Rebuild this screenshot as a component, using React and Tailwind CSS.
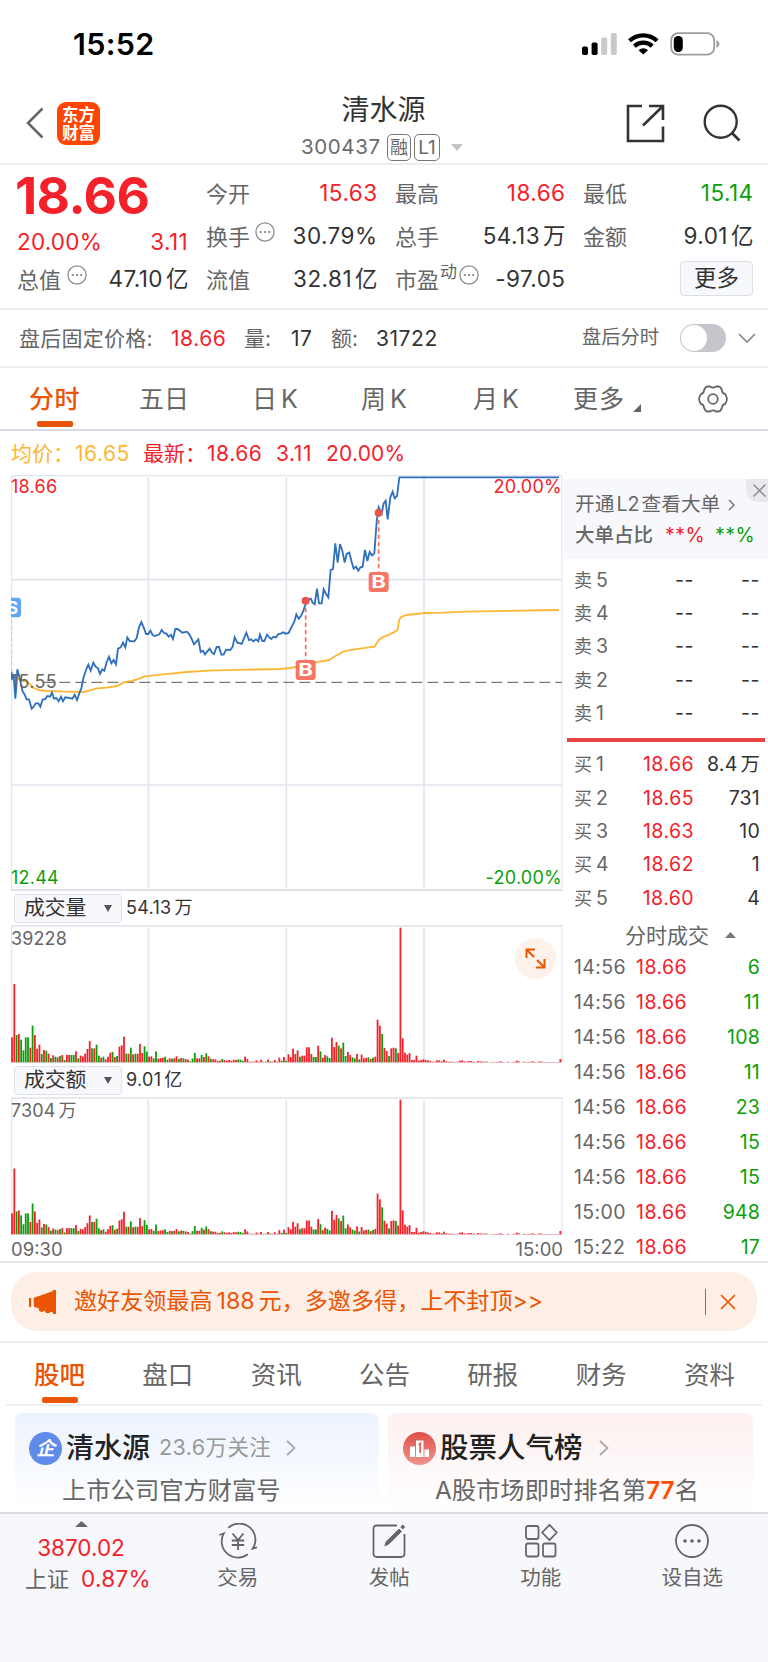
import React from "react";

const RED = "#f4212a";
const GREEN = "#0a9f0a";

const PRICE =
  "36,655 39,645 42,660 46,716 49,680 52,628 58,650 63,672 68,695 73,702 80,718 87,718 95,746 101,740 107,730 115,730 121,740 128,718 135,718 142,708 150,710 156,698 162,716 169,714 176,724 183,710 189,724 196,712 203,713 217,716 224,704 231,720 238,700 244,685 250,655 258,630 265,614 272,632 280,608 287,620 294,625 300,642 307,628 313,632 320,606 327,590 334,610 341,600 348,613 354,566 362,562 369,548 376,562 382,532 389,543 403,544 410,534 417,502 424,486 431,502 438,522 445,522 451,512 458,525 465,528 478,523 485,510 492,519 499,521 506,530 513,524 519,537 526,507 533,507 547,518 561,515 568,523 575,537 582,553 595,538 602,576 609,572 615,583 629,566 636,578 642,582 650,561 657,561 664,584 671,584 678,569 691,570 698,560 704,532 712,548 725,552 733,532 739,518 747,540 753,538 760,544 768,538 775,544 780,524 787,543 793,543 801,524 808,532 814,537 820,530 828,532 835,522 842,521 850,517 857,521 866,519 875,500 883,485 889,463 896,476 903,468 909,455 916,435 922,422 932,416 938,428 944,433 951,386 957,430 965,430 971,388 978,402 985,412 992,330 999,327 1006,250 1013,308 1020,252 1027,272 1034,308 1040,282 1048,278 1055,306 1061,326 1068,320 1075,332 1081,322 1088,320 1095,270 1102,303 1109,276 1116,286 1123,280 1130,185 1136,142 1145,160 1151,130 1157,122 1163,178 1171,112 1178,95 1184,115 1191,108 1198,52 1677,52";

const AVERAGE =
  "36,650 52,655 65,663 78,663 90,672 98,682 115,690 140,693 200,695 252,696 270,691 290,685 320,683 352,678 370,668 410,659 435,649 490,643 560,636 625,632 740,629 840,627 870,624 925,615 945,607 987,600 1010,586 1030,575 1045,571 1080,566 1123,560 1137,540 1146,532 1168,524 1192,511 1198,478 1205,470 1220,465 1275,459 1330,458 1400,455 1677,450";

// One entry per minute; negative values are falling minutes.
const MINUTES = [
  75, 235, -82, 85, -68, -36, -75, -75, 44, -110, 82, 41, 53, -25, 37, -35, 26, -13, 21, -17, 15, -19, 22, -7, 22, 22, -22,
  -22, 33, -12, 20, 18, 26, 40, 64, -42, 42, -53, -20, 14, -17, 9, 17, 29, -31, 16, -19, 47, 51, 77, -26, 26, -44, 24, -26,
  26, 55, 28, -48, -32, 17, 18, -12, -33, 11, 13, 14, -17, -8, 12, -11, 12, 18, -10, 13, -12, 10, 8, -3, -11, -28, 12, 12,
  -22, 16, -27, 18, -11, 9, 9, 5, 5, -10, 7, 5, 7, 5, 8, 7, -9, -8, -5, 17, 10, 2, 2, 2, 6, 2, 8, -2, 2, 8, -3, 2, 7, 2, 14,
  -5, 16, -5, 24, 16, 41, 25, 36, -17, 20, 20, 45, 45, 25, -16, -16, 50, -33, 14, 22, -18, -13, 74, 46, 61, -50, 42, -59,
  -19, 31, 22, -15, -12, 25, -9, 23, 12, 14, -15, 10, -14, 17, 128, 110, -85, 43, 34, -19, 42, 44, -42, 28, 404, 72, 29, 23,
  28, 7, 7, 20, 5, 7, 9, 8, 6, 4, 2, 2, 6, 6, 3, 8, 3, 2, 2, 2, 1, 2, 5, 6, 3, 2, 4, 4, 2, 1, 4, 3, 2, 2, 2, 0, 1, 1, 1, 2, 3,
  1, 0, 2, 0, 1, 2, 5, 3, 0, 2, 1, 1, 2, 3, 1, 1, 3, 2, 1,
];
const VOLUME = [...MINUTES, ...Array(Math.max(0, 240 - MINUTES.length)).fill(1), 10];

// Turnover is volume weighted with the share price of that minute.
const TURNOVER = VOLUME.map((v, i) => v * (i < 34 ? 0.84 : i < 122 ? 0.885 : i < 140 ? 0.92 : i < 170 ? 0.955 : 1));

const SELLS = ["卖5", "卖4", "卖3", "卖2", "卖1"];
const BUYS = [
  ["买", "1", "18.66", "8.4万"],
  ["买", "2", "18.65", "731"],
  ["买", "3", "18.63", "10"],
  ["买", "4", "18.62", "1"],
  ["买", "5", "18.60", "4"],
];
const TICKS = [
  ["14:56", "6"],
  ["14:56", "11"],
  ["14:56", "108"],
  ["14:56", "11"],
  ["14:56", "23"],
  ["14:56", "15"],
  ["14:56", "15"],
  ["15:00", "948"],
  ["15:22", "17"],
];

// A figure, with a small gap before a 万 or 亿 unit.
function Num({ children, className = "" }) {
  const unit = /[万亿]$/.test(children) ? children.slice(-1) : "";
  return (
    <span className={className}>
      {unit ? children.slice(0, -1) : children}
      {unit && <span className="ml-[3px] tracking-normal">{unit}</span>}
    </span>
  );
}

function Info({ className = "" }) {
  return (
    <svg viewBox="0 0 20 20" className={"size-5 shrink-0 " + className}>
      <circle cx="10" cy="10" r="9.1" fill="none" stroke="#8e8e8e" strokeWidth="1.3" />
      <circle cx="5.8" cy="10" r="1.1" fill="#777" />
      <circle cx="10" cy="10" r="1.1" fill="#777" />
      <circle cx="14.2" cy="10" r="1.1" fill="#777" />
    </svg>
  );
}

function StatusBar() {
  return (
    <div className="flex h-[88px] shrink-0 items-center pl-[73px] pr-[48px]">
      <div className="text-[30.500px] font-semibold leading-none tracking-[0.300px] text-black">15:52</div>
      <svg viewBox="0 0 138 24" className="ml-auto h-6 w-[138px]">
        <g transform="translate(0 .5)">
          <rect x="0" y="14" width="6" height="8.5" rx="1.8" fill="#000" />
          <rect x="9.6" y="10" width="6" height="12.5" rx="1.8" fill="#000" />
          <rect x="19.2" y="5" width="6" height="17.5" rx="1.8" fill="#c9c9c9" />
          <rect x="28.8" y="0.5" width="6" height="22" rx="1.8" fill="#c9c9c9" />
        </g>
        <g fill="none" stroke="#000" strokeWidth="4.3">
          <path d="M47.5 8.8 a20 20 0 0 1 27.6 0" />
          <path d="M52.4 14.2 a12.8 12.8 0 0 1 17.8 0" />
        </g>
        <path d="M61.3 22.6 L56.6 18.2 a6.9 6.9 0 0 1 9.4 0 Z" fill="#000" />
        <rect x="89.2" y="1.2" width="43" height="21.4" rx="7" fill="none" stroke="#9d9d9d" strokeWidth="1.8" />
        <rect x="91.8" y="4" width="9" height="16" rx="4.2" fill="#000" />
        <path d="M134.5 8 q3 1.4 3 4 t-3 4z" fill="#9d9d9d" />
      </svg>
    </div>
  );
}

function NavBar() {
  return (
    <div className="flex h-[77px] shrink-0 justify-between border-b-2 border-[#ececee] pl-[26px] pr-[27px]">
      <div className="flex w-[250px] items-start pt-[14px]">
        <svg viewBox="0 0 18 32" className="mt-[5px] h-8 w-[18px]">
          <path d="M16.5 1.5 L2 16 L16.5 30.5" fill="none" stroke="#666" strokeWidth="2.6" />
        </svg>
        <div className="ml-[13px] flex h-[43px] w-[43px] flex-col items-center justify-center rounded-[9px] bg-[#ff4400] text-[16.500px] font-bold leading-[18px] text-white">
          <span>东方</span>
          <span>财富</span>
        </div>
      </div>
      <div className="flex flex-col items-center pt-[7px]">
        <div className="text-[28px] leading-[30px] text-[#333]">清水源</div>
        <div className="ml-[-3px] mt-[9px] flex h-[27px] items-center text-[20.5px] leading-none text-[#6b6b6b]">
          <span className="w-[86px] tracking-[0.600px]">300437</span>
          <span className="flex h-[27px] w-[24px] items-center justify-center rounded-[5px] border border-[#777] text-[18px]">融</span>
          <span className="ml-[3px] flex h-[27px] w-[26px] items-center justify-center rounded-[5px] border border-[#777] text-[19px]">L1</span>
          <svg viewBox="0 0 12 7" className="ml-[11px] h-[7px] w-3">
            <path d="M0 0H12L6 7Z" fill="#c4c4c4" />
          </svg>
        </div>
      </div>
      <div className="flex w-[250px] items-start justify-end gap-[38px] pt-[16px]">
        <svg viewBox="0 0 39 39" className="h-[39px] w-[39px]">
          <path d="M16 2H2V37H37V22.5M23 2H37V16M37 2L17 21.500" fill="none" stroke="#333" strokeWidth="2.6" />
        </svg>
        <svg viewBox="0 0 38 38" className="h-[38px] w-[38px]">
          <circle cx="17.700" cy="17.700" r="16" fill="none" stroke="#333" strokeWidth="2.4" />
          <path d="M28.500 28.500L36.500 36.500" stroke="#333" strokeWidth="2.600" />
        </svg>
      </div>
    </div>
  );
}

function Cell({ label, value, color = "text-[#333]", extra }) {
  return (
    <div className="flex h-[43px] items-center leading-none">
      <span className="text-[22px] text-[#666]">{label}</span>
      {extra}
      <Num className={"ml-auto mr-[-0.5px] text-[22.5px] tracking-[0.450px] " + color}>{value}</Num>
    </div>
  );
}

function Quote() {
  return (
    <div className="h-[145px] shrink-0 border-b-2 border-[#ececee] pl-[17px] pr-[15px] pt-[7px]">
      <div className="grid grid-cols-[171px_171px_170px_170px] justify-between">
        <div className="flex h-[86px] flex-col">
          <div className="ml-[-2px] mt-[-2px] text-[51.500px] font-bold leading-[51px] tracking-[-0.600px] text-[#f4212a]">18.66</div>
          <div className="mt-[9px] flex justify-between text-[22.500px] leading-[24px] text-[#f4212a]">
            <span className="tracking-[0.200px]">20.00%</span>
            <span className="tracking-[0.400px]">3.11</span>
          </div>
        </div>
        <div>
          <Cell label="今开" value="15.63" color="text-[#f4212a]" />
          <Cell label="换手" value="30.79%" extra={<Info className="mb-[10px] ml-[5px]" />} />
        </div>
        <div>
          <Cell label="最高" value="18.66" color="text-[#f4212a]" />
          <Cell label="总手" value="54.13万" />
        </div>
        <div>
          <Cell label="最低" value="15.14" color="text-[#0a9f0a]" />
          <Cell label="金额" value="9.01亿" />
        </div>
        <Cell label="总值" value="47.10亿" extra={<Info className="mb-[10px] ml-[6px]" />} />
        <Cell label="流值" value="32.81亿" />
        <Cell
          label="市盈"
          value="-97.05"
          extra={
            <>
              <span className="mb-[14px] ml-[1px] text-[17px] text-[#666]">动</span>
              <Info className="mb-[10px] ml-[2px]" />
            </>
          }
        />
        <div className="flex h-[43px] items-center justify-end">
          <button className="mb-[2px] flex h-[35px] w-[73px] items-center justify-center rounded border border-[#dcdfe8] bg-[#f7f8fb] text-[22.500px] leading-none text-[#333]">
            更多
          </button>
        </div>
      </div>
    </div>
  );
}

function AfterHours() {
  return (
    <div className="flex h-[58px] shrink-0 items-center border-b-2 border-[#ececee] pl-[19px] pr-[12px] text-[21px] leading-none text-[#666]">
      <span className="w-[152px] tracking-[0.250px]">盘后固定价格:</span>
      <span className="w-[73px] tracking-[0.550px] text-[#f4212a]">18.66</span>
      <span className="w-[47px]">量:</span>
      <span className="w-[40px] tracking-[0.500px] text-[#333]">17</span>
      <span className="w-[45px]">额:</span>
      <span className="tracking-[0.550px] text-[#333]">31722</span>
      <span className="ml-auto text-[19.300px]">盘后分时</span>
      <span className="ml-[21px] flex h-7 w-[46px] rounded-full bg-[#c4c6cc] p-[1px]">
        <span className="size-[26px] rounded-full bg-white" />
      </span>
      <svg viewBox="0 0 18 10" className="ml-[12px] h-[10px] w-[18px]">
        <path d="M1 1L9 9L17 1" fill="none" stroke="#888" strokeWidth="1.700" />
      </svg>
    </div>
  );
}

function Gear() {
  return (
    <svg viewBox="0 0 30 28" className="h-7 w-[30px]" fill="none" stroke="#666" strokeWidth="1.800" strokeLinejoin="round">
      <path d="M9.500 1.500 H12 Q15 3.800 18 1.500 H20.500 Q22 1.500 22.800 3 L24 5.200 Q24 8.600 27.300 9.200 L28.500 12 Q29.200 14 28.500 16 L27.300 18.800 Q24 19.400 24 22.800 L22.800 25 Q22 26.500 20.500 26.500 H18 Q15 24.200 12 26.500 H9.500 Q8 26.500 7.200 25 L6 22.800 Q6 19.400 2.700 18.800 L1.500 16 Q.8 14 1.500 12 L2.700 9.200 Q6 8.600 6 5.200 L7.200 3 Q8 1.500 9.500 1.500Z" />
      <circle cx="15" cy="14" r="4.800" />
    </svg>
  );
}

function PeriodTabs() {
  return (
    <div className="flex h-[63px] shrink-0 items-start border-b-2 border-[#d9dae4] pl-[29px] pt-[18px] text-[25px] leading-[27px] text-[#666]">
      <div className="flex w-[110px] flex-col text-[#ea5504]">
        <span className="font-medium tracking-[0.500px]">分时</span>
        <span className="ml-[8px] mt-[8px] h-[5.500px] w-[36px] rounded-[2px] bg-[#ea5504]" />
      </div>
      <span className="w-[113px]">五日</span>
      <span className="w-[109px]">日<span className="ml-[4px]">K</span></span>
      <span className="w-[112px]">周<span className="ml-[4px]">K</span></span>
      <span className="w-[100px]">月<span className="ml-[4px]">K</span></span>
      <span className="w-[60px] tracking-[1px]">更多</span>
      <svg viewBox="0 0 8 8" className="mt-[18px] h-2 w-2">
        <path d="M8 0V8H0Z" fill="#666" />
      </svg>
      <span className="ml-[57px] mt-[-1px]"><Gear /></span>
    </div>
  );
}

function Marker({ x, y1, y2 }) {
  return (
    <g fill="#f96a5a">
      <path d={`M${x} ${y1}V${y2}`} stroke="#f96a5a" strokeWidth="5" strokeDasharray="13 9" />
      <circle cx={x} cy={y1} r="12" fill="#e8544e" />
      <rect x={x - 30} y={y2} width="60" height="60" rx="10" fillOpacity=".92" />
      <text x={x - 22} y={y2 + 49} fontSize="52" fontWeight="700" fill="#fff" textLength="44" lengthAdjust="spacingAndGlyphs">B</text>
    </g>
  );
}

function PriceChart() {
  return (
    <div className="relative h-[416px] w-[553px] text-[18px] leading-none tracking-[0.250px]">
      <svg viewBox="33 45 1659 1248" className="h-[416px] w-[553px] tracking-normal">
        <g fill="none" stroke="#e1e5ee" strokeWidth="5">
          <path d="M445 52V1283M859 52V1283M1272 52V1283M35 359H1686M35 975H1686" />
          <path d="M35 47V1290M1686 47V1290M35 47H1686" strokeWidth="3.500" />
          <path d="M33 1290H1688" stroke="#d6dae2" />
        </g>
        <path d="M130 667H1686" stroke="#777" strokeWidth="4" strokeDasharray="33 15" />
        <path d="M35 480V640" stroke="#b9d3fb" strokeWidth="4" strokeDasharray="9 9" />
        <polyline points={AVERAGE} fill="none" stroke="#fdb735" strokeWidth="5.500" strokeLinejoin="round" />
        <path d="M33 632l14 20l-14 10z" fill="#2f7df6" />
        <polyline points={PRICE} fill="none" stroke="#2f70bd" strokeWidth="5.500" strokeLinejoin="miter" />
        <g>
          <rect x="10" y="413" width="53" height="59" rx="10" fill="#62a4fb" />
          <text x="37" y="462" fontSize="52" fontWeight="700" fill="#fff" textAnchor="middle">S</text>
        </g>
        <Marker x={917} y1={422} y2={600} />
        <Marker x={1136} y1={158} y2={336} />
      </svg>
      <span className="absolute left-0 top-[3px] text-[#f4212a]">18.66</span>
      <span className="absolute right-[2px] top-[3px] text-[#f4212a]">20.00%</span>
      <span className="absolute left-0 top-[198px] text-[#666]">15.55</span>
      <span className="absolute bottom-[4px] left-0 text-[#0a9f0a]">12.44</span>
      <span className="absolute bottom-[4px] right-[2px] text-[#0a9f0a]">-20.00%</span>
    </div>
  );
}

function Bars({ top, data }) {
  return (
    <div className="relative h-[138px] w-[553px] text-[18px] leading-none text-[#666]">
      <svg viewBox="33 193 1659 414" className="h-[138px] w-[553px]">
        <g fill="none" stroke="#e1e5ee" strokeWidth="5">
          <path d="M445 202V605M859 202V605M1272 202V605" />
          <path d="M35 195V607M1686 195V607" strokeWidth="3.500" />
          <path d="M33 196H1688" stroke="#dfe2e9" />
          <path d="M33 606.500H1688" strokeWidth="3" />
        </g>
        {data.map((v, i) => {
          const h = Math.abs(v);
          return <rect key={i} x={33.400 + i * 6.854} y={605 - h} width="5.400" height={h} fill={v < 0 ? GREEN : RED} />;
        })}
      </svg>
      <Num className="absolute left-0 top-[5px] tracking-[0.100px]">{top}</Num>
    </div>
  );
}

function Indicator({ name, value }) {
  return (
    <div className="flex h-[34px] items-center pl-[3px] leading-none text-[#333]">
      <div className="flex h-[29px] w-[108px] items-center justify-between rounded-[4px] border border-[#dfe1e8] bg-[#f7f8fb] pl-[9px] pr-[9px] text-[20.800px]">
        {name}
        <svg viewBox="0 0 8 7" className="h-[7px] w-2">
          <path d="M0 0H8L4 7Z" fill="#555" />
        </svg>
      </div>
      <Num className="ml-[4px] text-[18px] tracking-[0.300px]">{value}</Num>
    </div>
  );
}

function OrderBook() {
  return (
    <div className="flex w-[204px] flex-col overflow-hidden pt-[4px]">
      <div className="relative h-[80px] shrink-0 overflow-hidden bg-[#f7f8fb] pl-[11px] pt-[15px] leading-none text-[#666]">
        <div className="flex h-[22px] items-center text-[19.700px]">
          <span>开通</span>
          <span className="ml-[2px]">L2</span>
          <span className="ml-[2px]">查看大单</span>
          <svg viewBox="0 0 7 12" className="ml-[8px] h-3 w-[7px]">
            <path d="M1 1L6 6L1 11" fill="none" stroke="#777" strokeWidth="1.500" />
          </svg>
        </div>
        <div className="mt-[9px] flex h-[22px] items-center text-[19.500px]">
          <span className="w-[90px] font-medium">大单占比</span>
          <span className="w-[50px] tracking-[0.500px] text-[#f4212a]">**%</span>
          <span className="tracking-[0.500px] text-[#0a9f0a]">**%</span>
        </div>
        <div className="absolute right-0 top-0 flex h-[23px] w-[22px] items-center justify-center rounded-bl-[12px] bg-[#e8e9ec] pl-[4px]">
          <svg viewBox="0 0 13 13" className="size-[13px]">
            <path d="M.5 .5L12.500 12.500M12.500 .5L.5 12.500" stroke="#888" strokeWidth="1.400" />
          </svg>
        </div>
      </div>
      <div className="shrink-0 pt-[5px] text-[19.500px] leading-none text-[#333]">
        {SELLS.map((s) => (
          <div key={s} className="flex h-[33.300px] items-center pl-[10px] pr-[8px]">
            <span className="w-[60px] text-[#666]">
              <span className="mr-[4px] text-[18px]">{s[0]}</span>
              {s[1]}
            </span>
            <span className="w-[60px] text-right tracking-[0.500px]">--</span>
            <span className="ml-auto tracking-[0.500px]">--</span>
          </div>
        ))}
        <div className="mx-[3px] mb-[6px] mt-[8px] h-[4px] bg-[#ea4343]" />
        {BUYS.map(([side, n, price, vol]) => (
          <div key={n} className="flex h-[33.300px] items-center pl-[10px] pr-[8px]">
            <span className="w-[60px] text-[#666]">
              <span className="mr-[4px] text-[18px]">{side}</span>
              {n}
            </span>
            <span className="w-[60px] text-right tracking-[0.450px] text-[#f4212a]">{price}</span>
            <Num className="ml-auto tracking-[0.200px]">{vol}</Num>
          </div>
        ))}
      </div>
      <div className="flex h-[35px] shrink-0 items-center pl-[61px] pt-[6px] text-[21px] leading-none text-[#666]">
        分时成交
        <svg viewBox="0 0 11 6" className="ml-[16px] h-[6px] w-[11px]">
          <path d="M0 6H11L5.500 0Z" fill="#777" />
        </svg>
      </div>
      {TICKS.map(([time, vol], i) => (
        <div key={i} className="flex h-[35.050px] shrink-0 items-center pl-[10px] pr-[8px] text-[19.500px] leading-none">
          <span className="w-[62px] tracking-[0.400px] text-[#666]">{time}</span>
          <span className="tracking-[0.450px] text-[#f4212a]">18.66</span>
          <span className="ml-auto tracking-[0.200px] text-[#0a9f0a]">{vol}</span>
        </div>
      ))}
    </div>
  );
}

function Charts() {
  return (
    <>
      <div className="flex h-[44px] shrink-0 items-center pl-[11px] text-[21px] leading-none">
        <span className="w-[64px] text-[#fdb735]">均价：</span>
        <span className="w-[68px] tracking-[0.550px] text-[#fdb735]">16.65</span>
        <span className="w-[64px] text-[#f4212a]">最新：</span>
        <span className="w-[69px] tracking-[0.550px] text-[#f4212a]">18.66</span>
        <span className="w-[50px] tracking-[0.550px] text-[#f4212a]">3.11</span>
        <span className="tracking-[0.200px] text-[#f4212a]">20.00%</span>
      </div>
      <div className="flex h-[788px] shrink-0 border-b-2 border-[#e3e4ea] pl-[11px]">
        <div className="w-[553px] shrink-0">
          <PriceChart />
          <Indicator name="成交量" value="54.13万" />
          <div className="relative">
            <Bars top="39228" data={VOLUME} />
            <span className="absolute right-[8px] top-[13px] flex size-[41px] items-center justify-center rounded-full bg-[#fef1ea]">
              <svg viewBox="0 0 21 21" className="size-[21px]" fill="none" stroke="#ea5504" strokeWidth="2">
                <path d="M10 1.500H1.500V10M1.500 1.500L9 9M11 19.500H19.500V11M19.500 19.500L12 12" />
              </svg>
            </span>
          </div>
          <Indicator name="成交额" value="9.01亿" />
          <Bars top="7304万" data={TURNOVER} />
          <div className="flex justify-between pr-[1px] pt-[4px] text-[18.500px] leading-[20px] text-[#666]">
            <span>09:30</span>
            <span>15:00</span>
          </div>
        </div>
        <OrderBook />
      </div>
    </>
  );
}

function Banner() {
  return (
    <div className="h-[80px] shrink-0 border-b-2 border-[#efeff1] px-[11px] pt-[9px]">
      <div className="flex h-[59px] items-center rounded-[26px] bg-[#fdeee6] pl-[18px] pr-[21px] text-[#ea5504]">
        <svg viewBox="0 0 27 24" className="h-6 w-[27px]" fill="#ea5504">
          <path d="M0 8H2.200V17H0ZM4.500 8L24 1V0H27V24H24V22.500L21.500 21.700Q20 24 17.500 23Q16 22.500 15.800 20.500Q13 23 10.500 21Q9.500 20 9.700 18L5 17Z" />
        </svg>
        <span className="ml-[18px] text-[23.100px] leading-none">
          邀好友领最高<span className="mx-[4px]">188</span>元，多邀多得，上不封顶&gt;&gt;
        </span>
        <span className="ml-auto h-[26px] w-[1.500px] bg-[#ea5504]" />
        <svg viewBox="0 0 16 16" className="ml-[14px] size-4">
          <path d="M1 1L15 15M15 1L1 15" stroke="#ea5504" strokeWidth="1.700" />
        </svg>
      </div>
    </div>
  );
}

function SectionTabs() {
  return (
    <div className="mx-[6px] flex h-[63px] shrink-0 justify-between border-b-2 border-[#efeff1] pl-[28px] pr-[27px] pt-[18px] text-[25.500px] leading-[28px] text-[#666]">
      {["股吧", "盘口", "资讯", "公告", "研报", "财务", "资料"].map((t, i) => (
        <div key={t} className={i === 0 ? "flex flex-col items-center font-medium text-[#ea5504]" : ""}>
          <span>{t}</span>
          {i === 0 && <span className="mt-[8px] h-[5.500px] w-[36px] rounded-[2px] bg-[#ea5504]" />}
        </div>
      ))}
    </div>
  );
}

function Chevron({ className }) {
  return (
    <svg viewBox="0 0 10 16" className={"h-4 w-[10px] " + className}>
      <path d="M1 1L8.500 8L1 15" fill="none" stroke="#aaa" strokeWidth="1.800" />
    </svg>
  );
}

function Cards() {
  return (
    <div className="flex h-[106px] shrink-0 gap-[9px] pl-[15px] pr-[15px] pt-[7px] leading-none">
      <div className="h-[99px] w-[364px] rounded-t-lg bg-linear-to-b from-[#ecf2fd] to-white pl-[14px] pt-[18px]">
        <div className="flex h-[34px] items-center">
          <span className="flex size-[33px] items-center justify-center rounded-full bg-[#5f8bea] text-[19px] font-bold italic text-white">企</span>
          <span className="ml-[4px] text-[28px] font-medium text-[#222]">清水源</span>
          <span className="ml-[9px] text-[21.500px] tracking-[0.400px] text-[#999]">23.6万关注</span>
          <Chevron className="ml-[15px]" />
        </div>
        <div className="mt-[12px] pl-[33px] text-[24.300px] leading-[26px] text-[#666]">上市公司官方财富号</div>
      </div>
      <div className="h-[99px] w-[365px] rounded-t-lg bg-linear-to-b from-[#fdf0f0] to-white pl-[15px] pt-[18px]">
        <div className="flex h-[34px] items-center">
          <svg viewBox="0 0 33 33" className="size-[33px]">
            <defs>
              <linearGradient id="rank" x1="0" y1="0" x2="0" y2="1">
                <stop offset="0" stopColor="#dd5048" />
                <stop offset="1" stopColor="#f0948f" />
              </linearGradient>
            </defs>
            <circle cx="16.500" cy="16.500" r="16.500" fill="url(#rank)" />
            <path d="M7 14.500H12V25H7ZM13 8.500H20.500V25H13ZM21.500 17.500H26V25H21.500Z" fill="#fff" />
            <path d="M15.500 12.800L17.200 11.500V21" fill="none" stroke="#e0645d" strokeWidth="1.800" />
          </svg>
          <span className="ml-[4px] text-[28.500px] font-medium text-[#222]">股票人气榜</span>
          <Chevron className="ml-[16px]" />
        </div>
        <div className="mt-[12px] pl-[32px] text-[24.300px] leading-[26px] text-[#666]">
          A股市场即时排名第<span className="font-semibold text-[#ff4d00]">77</span>名
        </div>
      </div>
    </div>
  );
}

function BottomItem({ label, children }) {
  return (
    <div className="flex w-[151.500px] flex-col items-center">
      <svg viewBox="0 0 38 36" className="mt-[9px] h-9 w-[38px]" fill="none" stroke="#666" strokeWidth="1.800">
        {children}
      </svg>
      <span className="mt-[7px] text-[20.500px] leading-[24px] text-[#666]">{label}</span>
    </div>
  );
}

function BottomBar() {
  return (
    <div className="flex h-[150px] shrink-0 border-t-2 border-[#dcdee2] bg-[#f7f8fb]">
      <div className="flex w-[162px] flex-col items-center pt-[7px] leading-none">
        <svg viewBox="0 0 13 6" className="h-[6px] w-[13px]">
          <path d="M0 6H13L6.500 0Z" fill="#666" />
        </svg>
        <div className="mt-[9px] text-[22.500px] leading-[24px] text-[#f4212a]">3870.02</div>
        <div className="ml-[14px] mt-[7px] flex items-center leading-[24px]">
          <span className="text-[22px] text-[#666]">上证</span>
          <span className="ml-[12px] text-[22.500px] tracking-[0.300px] text-[#f4212a]">0.87%</span>
        </div>
      </div>
      <BottomItem label="交易">
        <path d="M9.300 4.800A16.200 16.200 0 0 1 33.800 25.600L38 24.300M28.800 31.200A16.200 16.200 0 0 1 4.800 10.400L.4 12" />
        <path d="M13.500 10.500L19 17L24.500 10.500M19 17V27M12.800 17.500H25.200M12.800 22H25.200" />
      </BottomItem>
      <BottomItem label="发帖">
        <path d="M27 2.500H7Q3.500 2.500 3.500 6V30.500Q3.500 34 7 34H31Q34.500 34 34.500 30.500V11" />
        <path d="M14.800 23L16 18.800L29 6L31.500 8.500L18.500 21.300Z" fill="#666" strokeWidth=".8" strokeLinejoin="round" />
        <path d="M31.500 2.800L34 5.200" strokeWidth="3.400" />
      </BottomItem>
      <BottomItem label="功能">
        <rect x="4" y="3" width="12.500" height="13" rx="2" />
        <path d="M27.500 1.800L34.800 9.500L27.500 17.200L20.200 9.500Z" strokeLinejoin="round" />
        <rect x="4" y="20.500" width="12.500" height="13" rx="2" />
        <rect x="21" y="20.500" width="12.500" height="13" rx="2" />
      </BottomItem>
      <BottomItem label="设自选">
        <circle cx="19" cy="18" r="16" />
        <g fill="#666" stroke="none">
          <circle cx="12" cy="18" r="1.800" />
          <circle cx="19" cy="18" r="1.800" />
          <circle cx="26" cy="18" r="1.800" />
        </g>
      </BottomItem>
    </div>
  );
}

export default function App() {
  return (
    <div className="flex h-[1662px] w-[768px] flex-col overflow-hidden whitespace-nowrap bg-white font-['Inter','Noto_Sans_CJK_SC',sans-serif]">
      <StatusBar />
      <NavBar />
      <Quote />
      <AfterHours />
      <PeriodTabs />
      <Charts />
      <Banner />
      <SectionTabs />
      <Cards />
      <BottomBar />
    </div>
  );
}
